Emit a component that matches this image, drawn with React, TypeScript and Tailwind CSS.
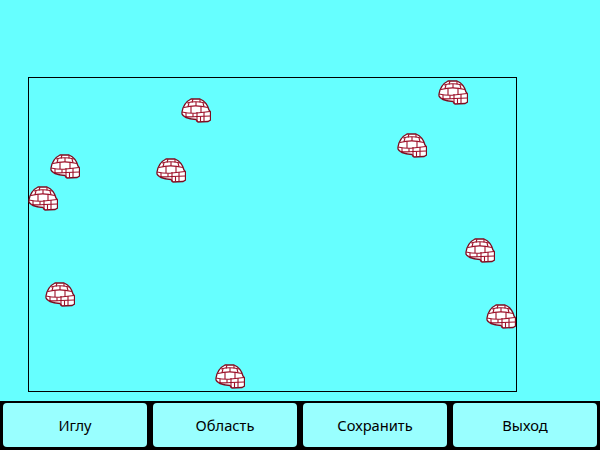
const IGLOOS = [
  { x: 181, y: 98 },
  { x: 438, y: 80 },
  { x: 397, y: 133 },
  { x: 50, y: 154 },
  { x: 156, y: 158 },
  { x: 28, y: 186 },
  { x: 465, y: 238 },
  { x: 45, y: 282 },
  { x: 486, y: 304 },
  { x: 215, y: 364 },
];

const BUTTONS = ["Иглу", "Область", "Сохранить", "Выход"];

function Igloo({ x, y }: { x: number; y: number }) {
  return (
    <svg
      className="absolute"
      style={{ left: x - 29, top: y - 78 }}
      width="30"
      height="25"
      viewBox="0 0 30 25"
      fill="none"
    >
      {/* dome and entrance */}
      <path
        d="M1 14 C2 8 6 3 10 1 L19 1 C24 3 27 8 28 12 L29.5 14 L29.5 22 L27 23.5 L17 24 L15 21.5 C9 21 2 19 1 16 Z"
        fill="#fff"
        stroke="#7c0c20"
        strokeWidth="1.3"
      />
      {/* brick rows */}
      <path
        d="M6 5 C11 3.5 18 3.5 24 5 M3 9.5 C10 7.5 19 7.5 27 9.5 M1 14 C6 15 11 15.5 16 15 L29 13.5 M3 18.5 C8 19 12 19 16 18.5 L29.5 18"
        stroke="#9c1028"
        strokeWidth="1.1"
      />
      {/* brick joints */}
      <path
        d="M12 1 L11 4.5 M19 1 L19 4.5 M8 5 L7 8.5 M15 4 L15 8 M22 5 L23 8.5 M10 8.5 L10 15 M20 8.5 L20 14.5 M5 15 L5 19 M12 15.5 L12 19 M16 14 L16 24 M23 14 L23 23.5 M19.5 18.5 L19.5 24"
        stroke="#9c1028"
        strokeWidth="1.1"
      />
    </svg>
  );
}

export default function App() {
  return (
    <div className="flex h-[450px] w-[600px] flex-col overflow-hidden bg-[#66ffff] font-['Noto_Sans',sans-serif]">
      <div className="flex-1 pl-[28px] pt-[77px]">
        <div className="relative h-[315px] w-[489px] border border-black">
          {IGLOOS.map((igloo) => (
            <Igloo key={`${igloo.x}-${igloo.y}`} x={igloo.x} y={igloo.y} />
          ))}
        </div>
      </div>

      <div className="flex h-[49px] gap-[6px] bg-black px-[3px] pb-[3px] pt-[2px]">
        {BUTTONS.map((label) => (
          <button
            key={label}
            className="flex-1 rounded-[4px] bg-[#99ffff] text-[14.7px] text-black"
          >
            {label}
          </button>
        ))}
      </div>
    </div>
  );
}
